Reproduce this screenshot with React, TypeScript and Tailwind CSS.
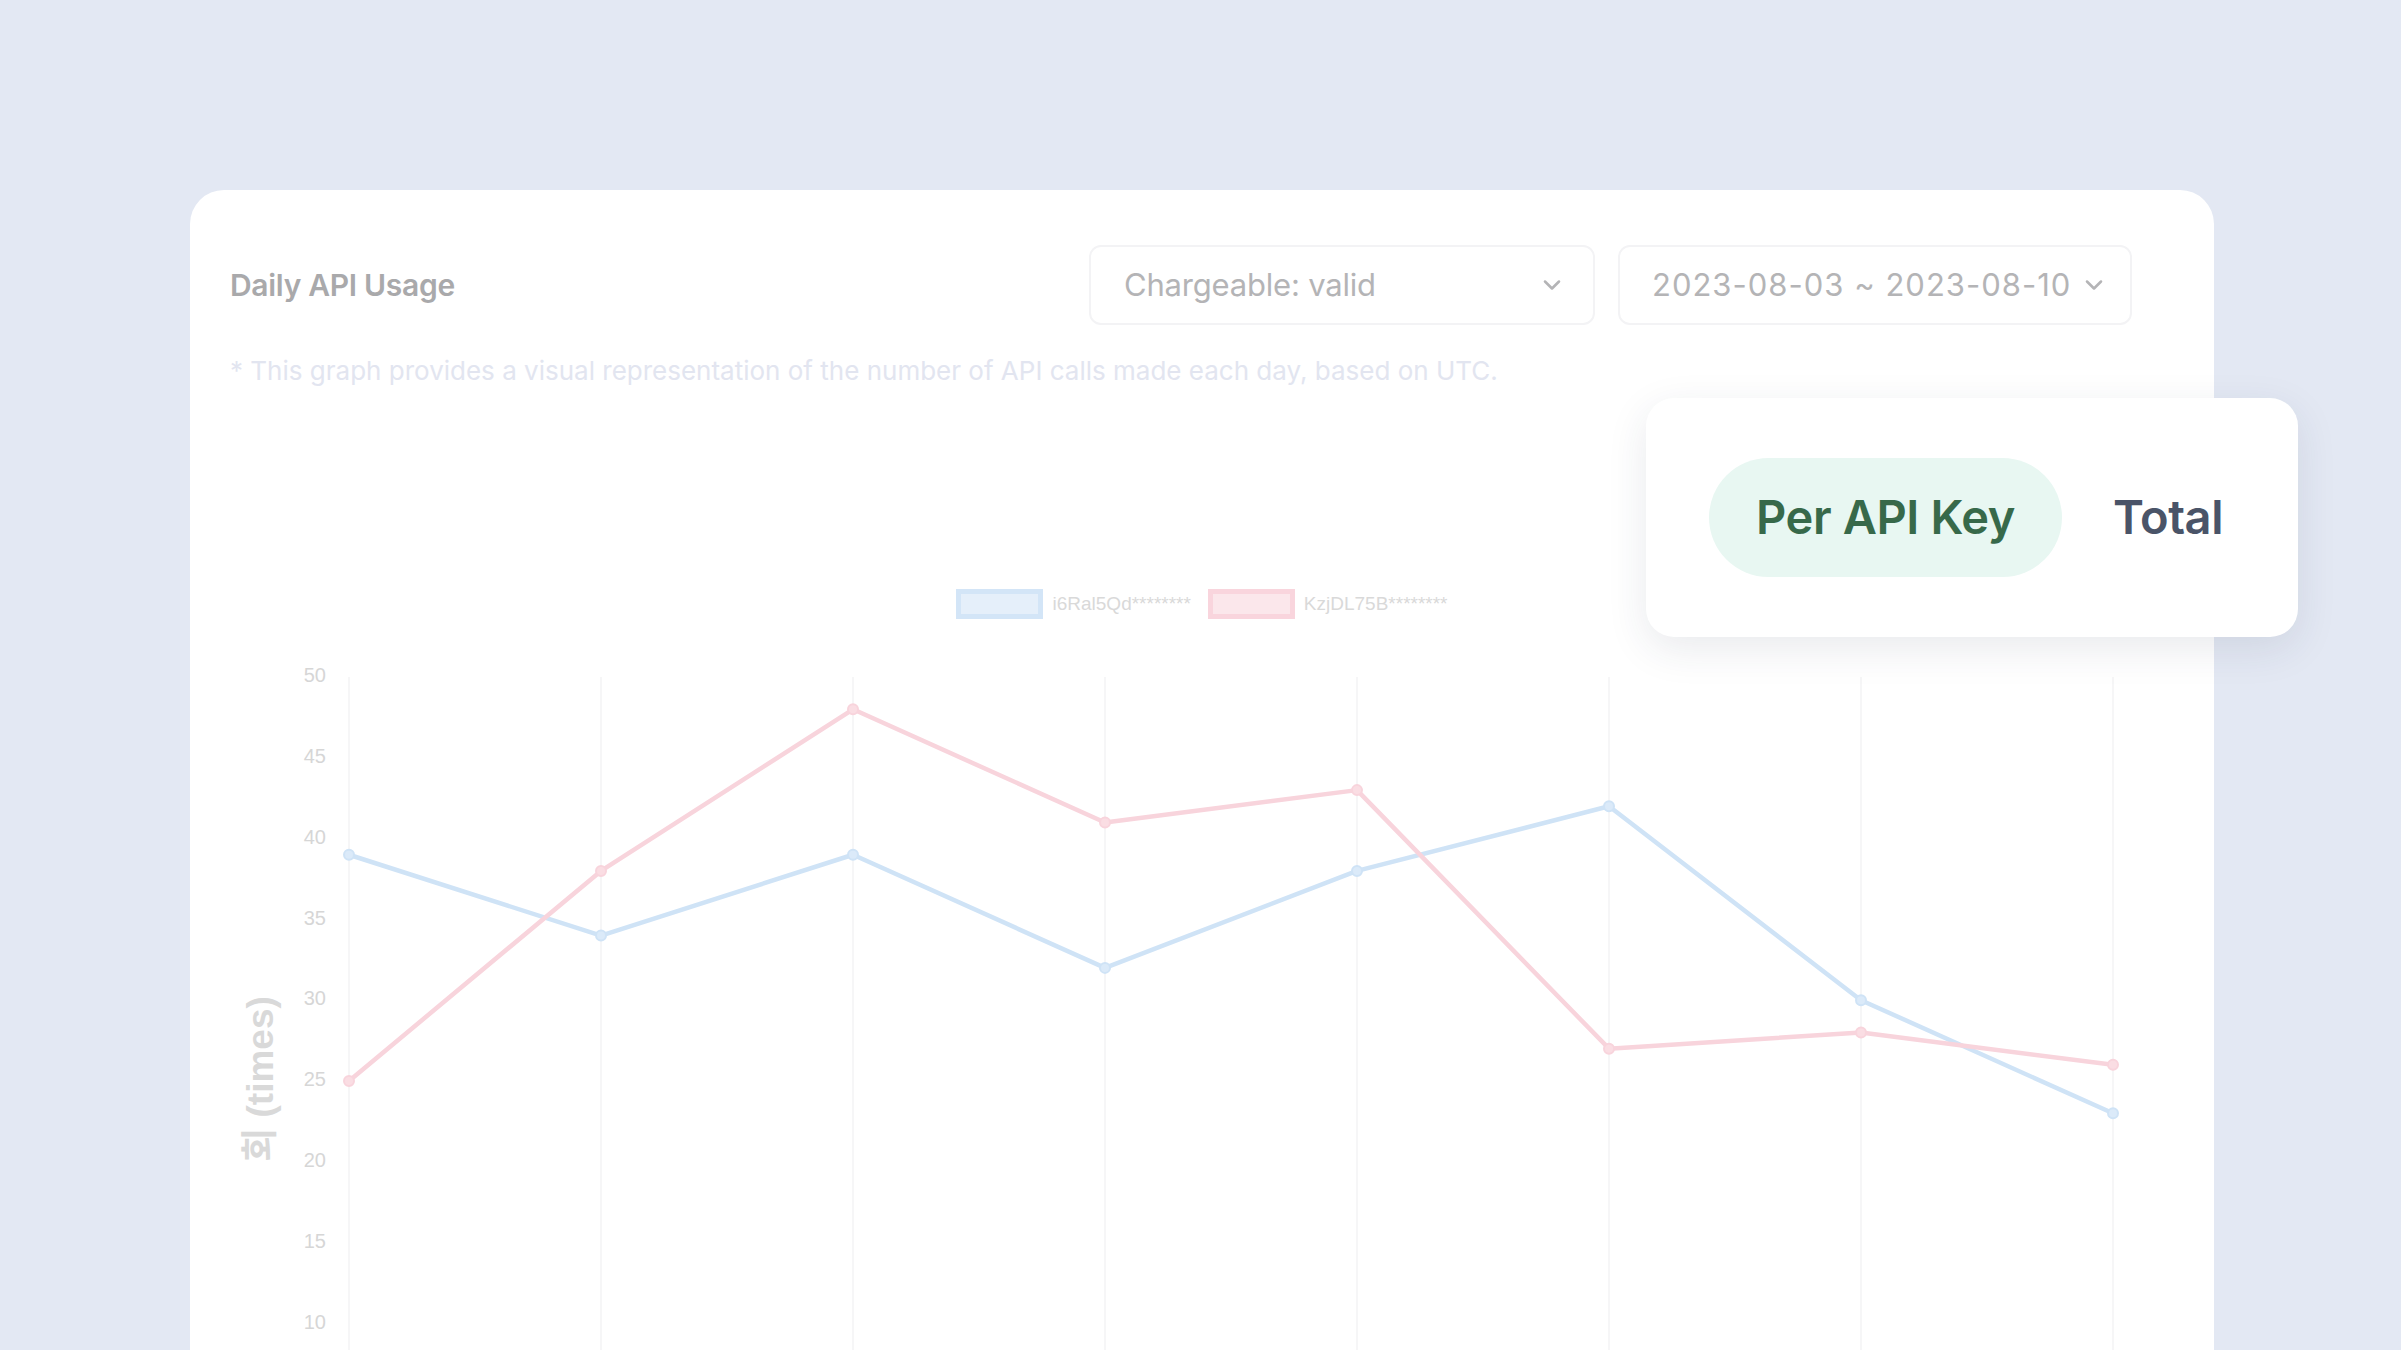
import React from "react";
import { ChevronDown } from "lucide-react";

const blue = [39, 34, 39, 32, 38, 42, 30, 23];
const pink = [25, 38, 48, 41, 43, 27, 28, 26];
const xs = [159, 411, 663, 915, 1167, 1419, 1671, 1923];
const yOf = (v: number) => 37 + (50 - v) * 16.16;
const ticks = [50, 45, 40, 35, 30, 25, 20, 15, 10];

function Chart() {
  const path = (d: number[]) => d.map((v, i) => `${i === 0 ? "M" : "L"}${xs[i]} ${yOf(v)}`).join(" ");
  return (
    <svg width={2024} height={720} className="block mt-[21px]">
      {xs.map((x) => (
        <line key={x} x1={x} y1={37} x2={x} y2={720} stroke="#f3f3f4" strokeWidth={1.5} />
      ))}
      {ticks.map((t) => (
        <text
          key={t}
          x={136}
          y={yOf(t)}
          textAnchor="end"
          dominantBaseline="middle"
          fontFamily="'Liberation Sans', Arial, sans-serif"
          fontSize={20}
          fill="#d6d6d6"
        >
          {t}
        </text>
      ))}
      <text
        x={73}
        y={439}
        transform="rotate(-90 73 439)"
        textAnchor="middle"
        dominantBaseline="middle"
        fontFamily="'Liberation Sans', 'Noto Sans CJK KR', Arial, sans-serif"
        fontWeight={700}
        fontSize={37}
        fill="#d9d9d9"
      >
        회 (times)
      </text>
      <path d={path(blue)} fill="none" stroke="#cfe3f6" strokeWidth={4.5} strokeLinejoin="round" />
      <path d={path(pink)} fill="none" stroke="#f8d4dc" strokeWidth={4.5} strokeLinejoin="round" />
      {blue.map((v, i) => (
        <circle key={"b" + i} cx={xs[i]} cy={yOf(v)} r={5} fill="#dbeaf9" stroke="#cfe3f6" strokeWidth={2} />
      ))}
      {pink.map((v, i) => (
        <circle key={"p" + i} cx={xs[i]} cy={yOf(v)} r={5} fill="#fadde3" stroke="#f8d4dc" strokeWidth={2} />
      ))}
    </svg>
  );
}

export default function App() {
  return (
    <div className="w-[2401px] h-[1350px] bg-[#e3e8f3] overflow-hidden pt-[190px] pl-[190px] font-['Inter',sans-serif]">
      <div className="relative w-[2024px] h-[1200px] bg-white rounded-[34px]">
        <div className="flex items-center justify-between pl-[40px] pr-[82px] pt-[55px]">
          <div className="text-[30px] font-semibold text-[#a9a9ab] tracking-[-0.3px]">Daily API Usage</div>
          <div className="flex gap-[23px]">
            <div className="w-[506px] h-[80px] border-2 border-[#f3f3f5] rounded-[12px] flex items-center justify-between pl-[33px] pr-[27px]">
              <span className="text-[31px] text-[#b4b4b6] tracking-[-0.2px]">Chargeable: valid</span>
              <ChevronDown size={28} strokeWidth={2.2} color="#b4b4b6" />
            </div>
            <div className="w-[514px] h-[80px] border-2 border-[#f3f3f5] rounded-[12px] flex items-center justify-between pl-[32px] pr-[22px]">
              <span className="text-[31px] text-[#b4b4b6] tracking-[1px]">2023-08-03 ~ 2023-08-10</span>
              <ChevronDown size={28} strokeWidth={2.2} color="#b4b4b6" />
            </div>
          </div>
        </div>
        <div className="pl-[40px] mt-[29px] text-[26px] leading-[34px] text-[#e2e5f0]">
          * This graph provides a visual representation of the number of API calls made each day, based on UTC.
        </div>
        <div className="flex justify-center items-center mt-[201px] h-[30px] font-['Liberation_Sans',Arial,sans-serif] text-[19px] text-[#d9d9d9]">
          <div className="w-[87px] h-[30px] border-[5px] border-[#d3e5f7] bg-[#e5effa]" />
          <span className="ml-[9px]">i6Ral5Qd********</span>
          <div className="ml-[17px] w-[87px] h-[30px] border-[5px] border-[#f9d5dd] bg-[#fbe7eb]" />
          <span className="ml-[9px]">KzjDL75B********</span>
        </div>
        <Chart />
        <div className="absolute left-[1456px] top-[208px] w-[652px] h-[239px] bg-white rounded-[28px] shadow-[0_12px_40px_rgba(40,50,80,0.10)] flex items-center pl-[63px]">
          <div className="w-[353px] h-[119px] rounded-full bg-[#e8f7f2] flex items-center justify-center text-[47px] font-semibold text-[#37694a] tracking-[-0.4px]">
            Per API Key
          </div>
          <div className="ml-[51px] text-[47px] font-semibold text-[#4a5468] tracking-[-0.4px]">Total</div>
        </div>
      </div>
    </div>
  );
}
